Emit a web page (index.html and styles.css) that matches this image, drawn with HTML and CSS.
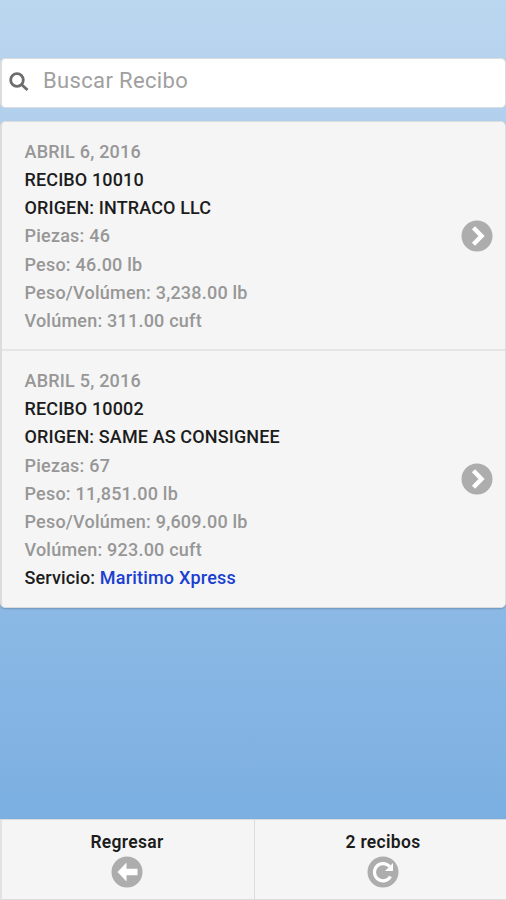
FILE: index.html
```
<!DOCTYPE html>
<html lang="es">
<head>
    <meta charset="UTF-8">
    <meta name="viewport" content="width=device-width, initial-scale=1.0">
    <title>Recibos</title>
    <link rel="stylesheet" href="styles.css">
</head>
<body>
    <div class="search-box">
        <svg class="search-icon" viewBox="0 0 20 20">
            <circle cx="8" cy="8" r="6.3"/>
            <path d="M12.5 12.5L18.500 18"/>
        </svg>
        <input type="text" id="search" placeholder="Buscar Recibo">
    </div>

    <ul class="recibos">
        <li class="recibo">
            <div class="datos">
                <p>ABRIL 6, 2016</p>
                <p class="fuerte">RECIBO 10010</p>
                <p class="fuerte">ORIGEN: INTRACO LLC</p>
                <p>Piezas: 46</p>
                <p>Peso: 46.00 lb</p>
                <p>Peso/Volúmen: 3,238.00 lb</p>
                <p>Volúmen: 311.00 cuft</p>
            </div>
            <svg class="icono" viewBox="0 0 32 32">
                <circle cx="16" cy="16" r="15.5"/>
                <path d="M12.5 7.800L20.500 16L12.500 24.200"/>
            </svg>
        </li>
        <li class="recibo">
            <div class="datos">
                <p>ABRIL 5, 2016</p>
                <p class="fuerte">RECIBO 10002</p>
                <p class="fuerte">ORIGEN: SAME AS CONSIGNEE</p>
                <p>Piezas: 67</p>
                <p>Peso: 11,851.00 lb</p>
                <p>Peso/Volúmen: 9,609.00 lb</p>
                <p>Volúmen: 923.00 cuft</p>
                <p class="fuerte">Servicio: <span class="servicio">Maritimo Xpress</span></p>
            </div>
            <svg class="icono" viewBox="0 0 32 32">
                <circle cx="16" cy="16" r="15.5"/>
                <path d="M12.5 7.800L20.500 16L12.500 24.200"/>
            </svg>
        </li>
    </ul>

    <div class="footer">
        <div class="boton">
            <span>Regresar</span>
            <svg class="icono" viewBox="0 0 32 32">
                <circle cx="16" cy="16" r="15.5"/>
                <path class="relleno" d="M6.500 16L15.500 6.500V12.800H26.500V19.200H15.500V25.500Z"/>
            </svg>
        </div>
        <div class="boton">
            <span>2 recibos</span>
            <svg class="icono" viewBox="0 0 32 32">
                <circle cx="16" cy="16" r="15.5"/>
                <path class="flecha" d="M23.500 20.500A8.600 8.600 0 1 1 22.500 10.500"/>
                <path class="relleno" d="M26 7V15H18Z"/>
            </svg>
        </div>
    </div>
</body>
</html>
```
FILE: styles.css
```
* {
    box-sizing: border-box;
}
body {
    font-family: Roboto, sans-serif;
    background: linear-gradient(#bbd6ef, #75abe0);
    margin: 0;
    padding-top: 58px;
    height: 900px;
    display: flex;
    flex-direction: column;
    overflow: hidden;
}
.search-box {
    display: flex;
    align-items: center;
    height: 50px;
    margin-bottom: 13px;
    padding: 0 7px 2px;
    background-color: #fff;
    border: 1px solid #dcdcdc;
    border-left-width: 2px;
    border-radius: 5px;
}
.search-icon {
    width: 20px;
    height: 20px;
    fill: none;
    stroke: #6c6c6c;
    stroke-width: 2.8;
}
input[type="text"] {
    flex: 1;
    margin-left: 14px;
    padding: 0 0 3px;
    border: none;
    background: none;
    font-family: inherit;
    font-size: 22px;
    letter-spacing: 0.35px;
}
input::placeholder {
    color: #a0a0a0;
}
.recibos {
    list-style: none;
    margin: 0;
    padding: 0;
    background-color: #f5f5f5;
    border: 1px solid #dcdcdc;
    border-left-width: 2px;
    border-radius: 5px;
    box-shadow: 0 1px 2px rgba(0, 0, 0, 0.2);
}
.recibo {
    display: flex;
    align-items: center;
    justify-content: space-between;
    padding: 16px 12px 14px 22.5px;
}
.recibo + .recibo {
    border-top: 2px solid #e5e5e5;
    padding-bottom: 15px;
}
.datos p {
    margin: 0;
    font-size: 18px;
    font-weight: 500;
    letter-spacing: 0.22px;
    line-height: 28.15px;
    color: #979797;
}
.datos .fuerte {
    color: #1c1c1c;
    letter-spacing: 0.13px;
}
.datos .servicio {
    color: #1a3fd0;
    letter-spacing: 0.2px;
}
.icono {
    width: 32px;
    height: 32px;
    fill: none;
    stroke: #fff;
    stroke-width: 4.5;
}
.recibo .icono {
    margin-bottom: 2px;
}
.icono circle {
    fill: #adadad;
    stroke: none;
}
.icono .flecha {
    stroke-width: 3.2;
}
.icono .relleno {
    fill: #fff;
    stroke: none;
}
/* el pie es un poco mas ancho que la pantalla */
.footer {
    display: flex;
    width: 512px;
    height: 81px;
    margin-top: auto;
    background-color: #f5f5f5;
    border: 1px solid #dcdcdc;
    border-left: 2px solid #e2e2e2;
}
.boton {
    flex: 1;
    display: flex;
    flex-direction: column;
    align-items: center;
    padding-top: 12px;
    font-size: 17.5px;
    font-weight: 600;
    letter-spacing: 0.3px;
    line-height: 21px;
    color: #1c1c1c;
}
.boton:first-child {
    flex: 0 0 252px;
    padding-right: 2px;
}
.boton + .boton {
    border-left: 1px solid #dcdcdc;
}
.boton .icono {
    margin-top: 3px;
}
```
